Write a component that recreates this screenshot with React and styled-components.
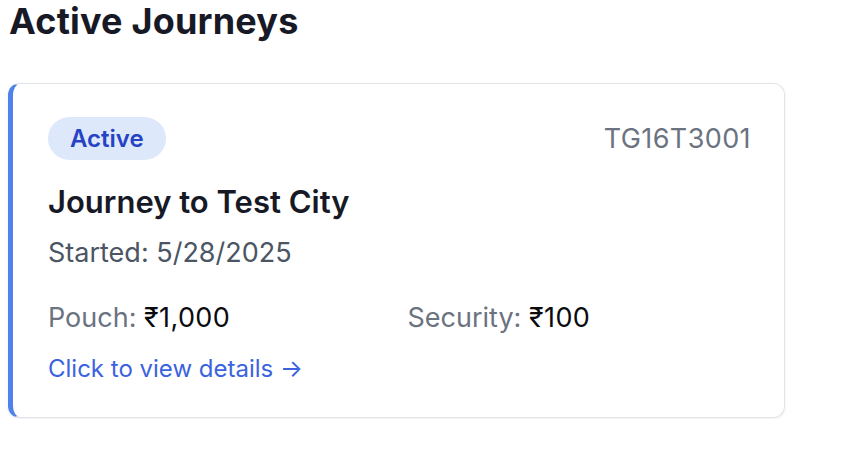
import styled, { createGlobalStyle } from 'styled-components'

const GlobalStyle = createGlobalStyle`
  body {
    margin: 0;
    background: #ffffff;
    font-family: Inter, "Noto Sans", sans-serif;
    color: #111827;
  }
`

const Page = styled.div`
  padding: 1px 8px;
  width: 777px;
`

const Heading = styled.h2`
  margin: 0 0 42px 1px;
  font-size: 36px;
  line-height: 40px;
  font-weight: 700;
  letter-spacing: 0.2px;
  color: #171a26;
`

const Card = styled.div`
  background: #fff;
  border: 1px solid #e2e4e8;
  border-left: 5px solid #4f82ea;
  border-radius: 12px;
  box-shadow: 0 1px 3px rgba(0, 0, 0, 0.08);
  padding: 33px 33px 32px 35px;
  display: flex;
  flex-direction: column;
  align-items: flex-start;
`

const TopRow = styled.div`
  align-self: stretch;
  display: flex;
  justify-content: space-between;
  align-items: center;
`

const Badge = styled.span`
  background: #dde8fb;
  color: #2643c4;
  font-size: 24px;
  font-weight: 600;
  line-height: 31px;
  padding: 6px 22px;
  border-radius: 999px;
`

const JourneyId = styled.span`
  color: #6b7280;
  font-size: 27px;
  line-height: 32px;
  letter-spacing: 0.4px;
`

const Title = styled.h3`
  margin: 23px 0 0;
  font-size: 31px;
  line-height: 38px;
  font-weight: 600;
  color: #171a26;
`

const Started = styled.p`
  margin: 14px 0 0;
  font-size: 27px;
  line-height: 36px;
  color: #4b5563;
`

const Stats = styled.div`
  align-self: stretch;
  display: grid;
  grid-template-columns: 1fr 1fr;
  column-gap: 16px;
  margin-top: 29px;
`

const Stat = styled.div`
  font-size: 27px;
  line-height: 36px;
  color: #6b7280;

  strong {
    font-weight: 400;
    letter-spacing: 0.4px;
    color: #0b0b0f;
  }
`

const DetailsLink = styled.a`
  margin-top: 17px;
  font-size: 24px;
  line-height: 32px;
  color: #3b63e0;
  text-decoration: none;
  cursor: pointer;
`

export default function App() {
  return (
    <>
      <GlobalStyle />
      <Page>
        <Heading>Active Journeys</Heading>
        <Card>
          <TopRow>
            <Badge>Active</Badge>
            <JourneyId>TG16T3001</JourneyId>
          </TopRow>
          <Title>Journey to Test City</Title>
          <Started>Started: 5/28/2025</Started>
          <Stats>
            <Stat>
              Pouch: <strong>₹1,000</strong>
            </Stat>
            <Stat>
              Security: <strong>₹100</strong>
            </Stat>
          </Stats>
          <DetailsLink>Click to view details →</DetailsLink>
        </Card>
      </Page>
    </>
  )
}
